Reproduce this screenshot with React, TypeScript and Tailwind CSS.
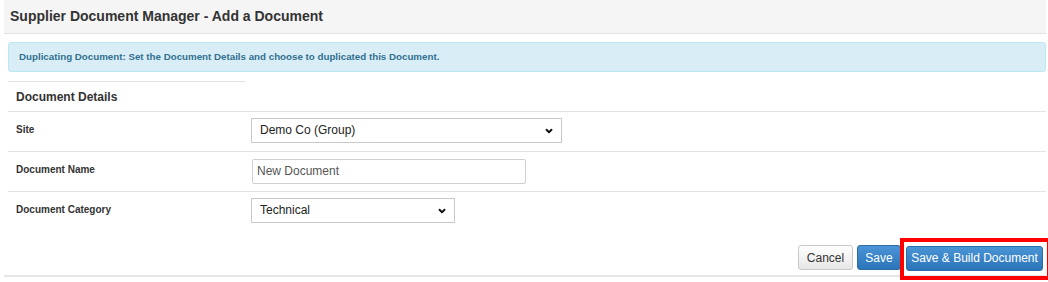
import { ChevronDown } from 'lucide-react';

function Select({ value, width }: { value: string; width: string }) {
  return (
    <div className={`relative h-[25px] ${width} border border-[#c8c8c8] bg-white`}>
      <div className="pl-[8px] leading-[23px] text-[12px] text-[#222]">{value}</div>
      <ChevronDown className="absolute right-[7px] top-[7px] w-[10px] h-[10px] text-[#111]" strokeWidth={4.5} />
    </div>
  );
}

export default function App() {
  return (
    <div className="w-[1048px] h-[282px] bg-white font-['Liberation_Sans',Arial,sans-serif] text-[#333]">
      <div className="ml-[4px] w-[1042px]">
        {/* Title bar */}
        <div className="h-[34px] bg-[#f5f5f5] border-b border-[#e3e3e3] pl-[6px] flex items-center">
          <h1 className="text-[14px] font-bold text-[#333]">Supplier Document Manager - Add a Document</h1>
        </div>

        <div className="pl-[4px]">
          {/* Info alert */}
          <div className="mt-[8px] h-[30px] rounded-[3px] border border-[#bce8f1] bg-[#d9edf7] pl-[10px] flex items-center">
            <p className="text-[9.75px] font-bold text-[#31708f]">
              Duplicating Document: Set the Document Details and choose to duplicated this Document.
            </p>
          </div>

          {/* Details table */}
          <div className="mt-[9px]">
            <div className="w-[237px] border-t border-[#e3e3e3] h-[30px] pl-[8px] flex items-center">
              <span className="text-[12px] font-bold text-[#333]">Document Details</span>
            </div>
            <div className="grid grid-cols-[243px_1fr] border-t border-[#e3e3e3] h-[40px]">
              <div className="pl-[8px] pt-[10px] text-[10px] font-bold">Site</div>
              <div className="pt-[6px]">
                <Select value="Demo Co (Group)" width="w-[311px]" />
              </div>
            </div>
            <div className="grid grid-cols-[243px_1fr] border-t border-[#e3e3e3] h-[40px]">
              <div className="pl-[8px] pt-[10px] text-[10px] font-bold">Document Name</div>
              <div className="pt-[6px] pl-[1px]">
                <input
                  defaultValue="New Document"
                  className="h-[25px] w-[274px] rounded-[2px] border border-[#d0d0d0] px-[4px] text-[12px] text-[#555] outline-none"
                />
              </div>
            </div>
            <div className="grid grid-cols-[243px_1fr] border-t border-[#e3e3e3] h-[40px]">
              <div className="pl-[8px] pt-[10px] text-[10px] font-bold">Document Category</div>
              <div className="pt-[6px]">
                <Select value="Technical" width="w-[204px]" />
              </div>
            </div>
          </div>
        </div>

        {/* Actions */}
        <div className="flex justify-end gap-[4px] pt-[14px] pb-[4px] pr-[3px] border-b-2 border-[#e6e6e6]">
          <button className="h-[25px] w-[55px] rounded-[3px] border border-[#c8c8c8] bg-gradient-to-b from-white to-[#e6e6e6] text-[12px] text-[#333]">
            Cancel
          </button>
          <button className="h-[25px] w-[44px] rounded-[3px] border border-[#2d6ca2] bg-gradient-to-b from-[#4a95d6] to-[#2a74b8] text-[12px] text-white">
            Save
          </button>
          <div className="relative ml-[1px]">
            <button className="h-[25px] w-[137px] rounded-[3px] border border-[#2d6ca2] bg-gradient-to-b from-[#4a95d6] to-[#2a74b8] text-[12px] text-white">
              Save &amp; Build Document
            </button>
            <div className="absolute left-[-6px] right-[-8px] top-[-7px] bottom-[-9px] border-[4px] border-[#f00] pointer-events-none" />
          </div>
        </div>
      </div>
    </div>
  );
}
